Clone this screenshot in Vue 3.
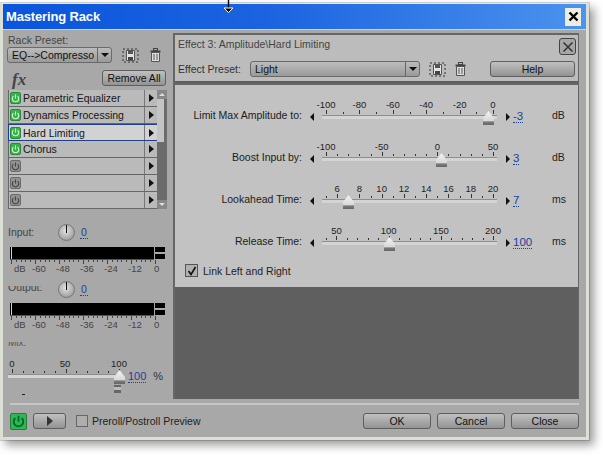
<script setup>
const effects = [
  { name: "Parametric Equalizer", on: true },
  { name: "Dynamics Processing", on: true },
  { name: "Hard Limiting", on: true, active: true },
  { name: "Chorus", on: true },
  { name: "", on: false },
  { name: "", on: false },
  { name: "", on: false },
];

// x positions are px inside a 175px wide slider, first tick at 4, last at 171
const makeTicks = (min, max, minorStep, isMajor) => {
  const out = [];
  for (let v = min; v <= max; v += minorStep) {
    out.push({ v, major: isMajor(v), x: 4 + ((v - min) / (max - min)) * 167 });
  }
  return out;
};

const sliders = [
  { label: "Limit Max Amplitude to:", value: "-3", unit: "dB", thumb: 166, ticks: makeTicks(-100, 0, 10, (v) => v % 20 === 0) },
  { label: "Boost Input by:", value: "3", unit: "dB", thumb: 119, ticks: makeTicks(-100, 50, 10, (v) => v % 50 === 0) },
  { label: "Lookahead Time:", value: "7", unit: "ms", thumb: 26, ticks: makeTicks(5, 20, 1, (v) => v % 2 === 0) },
  { label: "Release Time:", value: "100", unit: "ms", thumb: 67, ticks: makeTicks(40, 200, 10, (v) => v % 50 === 0) },
];

const meterLabels = [
  { t: "dB", x: 3 },
  { t: "-60", x: 21 },
  { t: "-48", x: 45 },
  { t: "-36", x: 69 },
  { t: "-24", x: 93 },
  { t: "-12", x: 117 },
  { t: "0", x: 143 },
];
const meterTicks = [];
for (let i = 0; i <= 30; i++) meterTicks.push({ x: 1 + i * 4.8, major: i % 5 === 0 });

const meters = [
  { label: "Input:", cls: "" },
  { label: "Output:", cls: "clipped" },
];

const mixTicks = [];
for (let v = 0; v <= 100; v += 10) mixTicks.push({ v, major: v % 50 === 0, x: 4 + v * 1.07 });
</script>

<template>
  <div class="page">
    <div class="win">
      <div class="title">
        <span class="title-text">Mastering Rack</span>
        <button class="x-btn">
          <svg width="11" height="11" viewBox="0 0 11 11"><path d="M1.5 1.5l8 8M9.5 1.5l-8 8" stroke="#000" stroke-width="2.4" /></svg>
        </button>
      </div>

      <div class="main">
        <div class="left">
          <div class="lbl rack-lbl">Rack Preset:</div>
          <div class="preset-row">
            <div class="select rack-select">
              <span class="select-text">EQ--&gt;Compresso</span>
              <span class="select-arrow"><i></i></span>
            </div>
            <svg class="save" width="17" height="15" viewBox="0 0 17 15">
              <rect x="1" y="1" width="15" height="13" fill="none" stroke="#333" stroke-dasharray="2 2" />
              <path d="M4.5 2.5h8v10h-8z" fill="#e4e4e4" stroke="#555" />
              <rect x="6" y="3" width="5" height="3" fill="#555" />
              <rect x="6" y="9" width="5" height="3" fill="#444" />
            </svg>
            <svg class="trash" width="11" height="14" viewBox="0 0 11 14">
              <rect x="3.5" y="0.5" width="4" height="2" fill="none" stroke="#444" />
              <rect x="0.5" y="2.5" width="10" height="2" fill="#444" />
              <path d="M1.5 4.5h8v9h-8z" fill="#ddd" stroke="#555" />
              <path d="M4 6v6M7 6v6" stroke="#555" />
            </svg>
          </div>

          <div class="fx-row">
            <span class="fx">fx</span>
            <button class="btn remove-all">Remove All</button>
          </div>

          <div class="rack">
            <div class="rack-list">
              <div v-for="(e, i) in effects" :key="i" class="rack-row" :class="{ active: e.active }">
                <span class="power" :class="{ on: e.on }">
                  <svg width="9" height="9" viewBox="0 0 9 9">
                    <path d="M2.4 2.2a3.2 3.2 0 1 0 4.2 0M4.5 0.5v4" fill="none" stroke="currentColor" stroke-width="1.1" />
                  </svg>
                </span>
                <span class="rack-name">{{ e.name }}</span>
                <span class="rack-arrow"><i class="tri-r"></i></span>
              </div>
            </div>
            <div class="scroll">
              <span class="scroll-end"><i class="tri-u"></i></span>
              <span class="scroll-thumb"></span>
              <span class="scroll-end bottom"><i class="tri-d"></i></span>
            </div>
          </div>

          <div v-for="m in meters" :key="m.label" class="meter-block" :class="m.cls">
            <div class="meter-head">
              <span class="lbl meter-lbl">{{ m.label }}</span>
              <span class="knob"><i></i></span>
              <span class="val">0</span>
            </div>
            <div class="meter">
              <div class="meter-bar"><i></i></div>
              <div class="meter-clip"><i></i><i></i></div>
            </div>
            <div class="meter-ticks">
              <i v-for="t in meterTicks" :key="t.x" :class="{ major: t.major }" :style="{ left: t.x + 'px' }"></i>
            </div>
            <div class="meter-scale">
              <span v-for="l in meterLabels" :key="l.t" :style="{ left: l.x + 'px' }">{{ l.t }}</span>
            </div>
          </div>

          <div class="lbl mix-lbl">Mix:</div>
          <div class="mix">
            <div class="mix-slider">
              <span class="tick-lbl" style="left: 4px">0</span>
              <span class="tick-lbl" style="left: 57px">50</span>
              <span class="tick-lbl" style="left: 111px">100</span>
              <i v-for="t in mixTicks" :key="t.v" class="tick" :class="{ major: t.major }" :style="{ left: t.x + 'px' }"></i>
              <span class="track"></span>
              <span class="thumb" style="left: 111px"></span>
              <span class="mix-mark"></span>
              <span class="mix-dash"></span>
            </div>
            <span class="val mix-val">100</span>
            <span class="mix-unit">%</span>
          </div>
        </div>

        <div class="right">
          <div class="fx-head">
            <div class="fx-title-row">
              <span class="fx-title">Effect 3: Amplitude\Hard Limiting</span>
              <button class="panel-x">
                <svg width="12" height="12" viewBox="0 0 12 12"><path d="M1.5 1.5l9 9M10.5 1.5l-9 9" stroke="#333" stroke-width="1.5" /></svg>
              </button>
            </div>
            <div class="fx-preset-row">
              <span class="fx-preset-lbl">Effect Preset:</span>
              <div class="select fx-select">
                <span class="select-text">Light</span>
                <span class="select-arrow"><i></i></span>
              </div>
              <svg class="save" width="17" height="15" viewBox="0 0 17 15">
                <rect x="1" y="1" width="15" height="13" fill="none" stroke="#333" stroke-dasharray="2 2" />
                <path d="M4.5 2.5h8v10h-8z" fill="#e4e4e4" stroke="#555" />
                <rect x="6" y="3" width="5" height="3" fill="#555" />
                <rect x="6" y="9" width="5" height="3" fill="#444" />
              </svg>
              <svg class="trash" width="11" height="14" viewBox="0 0 11 14">
                <rect x="3.5" y="0.5" width="4" height="2" fill="none" stroke="#444" />
                <rect x="0.5" y="2.5" width="10" height="2" fill="#444" />
                <path d="M1.5 4.5h8v9h-8z" fill="#ddd" stroke="#555" />
                <path d="M4 6v6M7 6v6" stroke="#555" />
              </svg>
              <button class="btn help">Help</button>
            </div>
          </div>

          <div class="fx-body">
            <div v-for="s in sliders" :key="s.label" class="s-row">
              <span class="s-label">{{ s.label }}</span>
              <i class="tri-l"></i>
              <div class="slider">
                <template v-for="t in s.ticks" :key="t.v">
                  <span v-if="t.major" class="tick-lbl" :style="{ left: t.x + 'px' }">{{ t.v }}</span>
                  <i class="tick" :class="{ major: t.major }" :style="{ left: t.x + 'px' }"></i>
                </template>
                <span class="track"></span>
                <span class="thumb" :style="{ left: s.thumb + 'px' }"></span>
              </div>
              <i class="tri-r small"></i>
              <span class="val s-val">{{ s.value }}</span>
              <span class="s-unit">{{ s.unit }}</span>
            </div>
            <label class="link">
              <span class="check">
                <svg width="10" height="10" viewBox="0 0 10 10"><path d="M1.5 5l2.5 3.5L8.5 1" fill="none" stroke="#111" stroke-width="1.6" /></svg>
              </span>
              Link Left and Right
            </label>
          </div>
          <div class="fx-empty"></div>
        </div>
      </div>

      <div class="foot">
        <span class="foot-power">
          <svg width="13" height="13" viewBox="0 0 13 13">
            <path d="M3.4 3a4.8 4.8 0 1 0 6.2 0M6.5 0.8v6" fill="none" stroke="#063" stroke-width="1.8" />
          </svg>
        </span>
        <button class="btn play"><i class="tri-play"></i></button>
        <span class="foot-check"></span>
        <span class="foot-lbl">Preroll/Postroll Preview</span>
        <span class="spacer"></span>
        <button class="btn foot-btn">OK</button>
        <button class="btn foot-btn">Cancel</button>
        <button class="btn foot-btn">Close</button>
      </div>
    </div>

    <svg class="cursor" width="11" height="14" viewBox="0 0 11 14">
      <path d="M5.5 0v9" stroke="#000" stroke-width="1.4" />
      <path d="M1 8h9l-4.5 4.6z" fill="#000" stroke="#fff" />
    </svg>
  </div>
</template>

<style scoped>
.page {
  position: relative;
  width: 603px;
  height: 456px;
  overflow: hidden;
  background: #fff;
  padding-top: 3px;
  box-sizing: border-box;
  font-family: "Liberation Sans", Arial, sans-serif;
  font-size: 10.5px;
  color: #1a1a1a;
}
.win {
  width: 589px;
  height: 437px;
  box-sizing: border-box;
  background: #a8a8a8;
  border-top: 1px solid #dfe6ee;
  border-left: 3px solid #dcdfd4;
  border-right: 3px solid #dcdfd4;
  border-bottom: 3px solid #dcdfd4;
  box-shadow: 5px 5px 9px rgba(0, 0, 0, 0.4), 0 0 0 1px rgba(90, 95, 88, 0.25);
  display: flex;
  flex-direction: column;
}
.title {
  height: 25px;
  flex: none;
  display: flex;
  align-items: center;
  justify-content: space-between;
  background: linear-gradient(90deg, #0a55dc 0%, #1b63e0 45%, #4b93ee 100%);
  border-bottom: 1px solid #c6d6e8;
  padding: 0 5px 0 3px;
}
.title-text {
  color: #fff;
  font-weight: bold;
  font-size: 13px;
  letter-spacing: -0.15px;
}
.x-btn {
  width: 16px;
  height: 18px;
  padding: 0;
  border: 0;
  background: #efece0;
  display: flex;
  align-items: center;
  justify-content: center;
}
.main {
  flex: none;
  height: 369px;
  display: flex;
}
.left {
  width: 164px;
  margin-left: 4px;
  flex: none;
}
.lbl {
  color: #3a3a3a;
}
.rack-lbl {
  margin-top: 3px;
  margin-left: 1px;
  height: 14px;
  line-height: 14px;
  color: #444;
}
.preset-row {
  display: flex;
  align-items: center;
  height: 16px;
}
.select {
  display: flex;
  height: 16px;
  box-sizing: border-box;
  border: 1px solid #6a6a6a;
  border-radius: 3px;
  background: linear-gradient(#bcbcbc, #9a9a9a);
  align-items: stretch;
}
.rack-select {
  width: 105px;
  flex: none;
}
.select-text {
  flex: 1;
  padding-left: 4px;
  line-height: 14px;
  color: #111;
  overflow: hidden;
  white-space: nowrap;
}
.select-arrow {
  width: 13px;
  border-left: 1px solid #666;
  display: flex;
  align-items: center;
  justify-content: center;
}
.select-arrow i {
  border-left: 4px solid transparent;
  border-right: 4px solid transparent;
  border-top: 4px solid #111;
}
.save {
  flex: none;
  margin-left: 10px;
}
.trash {
  flex: none;
  margin-left: 11px;
}
.fx-row {
  display: flex;
  justify-content: space-between;
  align-items: center;
  height: 16px;
  width: 159px;
  margin-top: 7px;
}
.fx {
  font-family: "Liberation Serif", serif;
  font-style: italic;
  font-weight: bold;
  font-size: 17px;
  color: #444;
  margin-left: 5px;
  margin-top: 3px;
}
.btn {
  font-family: inherit;
  font-size: 10.5px;
  color: #111;
  padding: 0;
  height: 16px;
  box-sizing: border-box;
  border: 1px solid #5e5e5e;
  border-radius: 3px;
  background: linear-gradient(#c0c0c0, #939393);
}
.remove-all {
  width: 64px;
}
.rack {
  display: flex;
  margin-top: 4px;
  height: 119px;
  width: 160px;
}
.rack-list {
  width: 149px;
  margin-left: 1px;
  border-left: 1px solid #666;
  box-sizing: border-box;
}
.rack-row {
  height: 17px;
  box-sizing: border-box;
  display: flex;
  align-items: center;
  background: #bababa;
  border-bottom: 1px solid #666;
}
.rack-row.active {
  background: #d2d2d2;
  border: 1px solid #1f3f86;
  margin-left: -1px;
  width: 150px;
}
.power {
  width: 11px;
  height: 12px;
  margin-left: 1px;
  flex: none;
  border-radius: 2px;
  background: #929292;
  border: 1px solid #6a6a6a;
  box-sizing: border-box;
  color: #444;
  display: flex;
  align-items: center;
  justify-content: center;
}
.power.on {
  background: #35b44a;
  border-color: #2a8a38;
  color: #dff5df;
}
.rack-name {
  flex: 1;
  margin-left: 2px;
  color: #151515;
  white-space: nowrap;
}
.rack-arrow {
  width: 12px;
  align-self: stretch;
  border-left: 1px solid #777;
  display: flex;
  align-items: center;
  justify-content: center;
}
.tri-r {
  display: block;
  border-top: 4px solid transparent;
  border-bottom: 4px solid transparent;
  border-left: 5px solid #111;
}
.tri-r.small {
  border-left-width: 4px;
  margin-left: 9px;
}
.tri-l {
  display: block;
  border-top: 4px solid transparent;
  border-bottom: 4px solid transparent;
  border-right: 4px solid #111;
  margin-left: 8px;
  margin-right: 8px;
}
.tri-u,
.tri-d {
  display: block;
  border-left: 3px solid transparent;
  border-right: 3px solid transparent;
}
.tri-u {
  border-bottom: 3px solid #ddd;
}
.tri-d {
  border-top: 3px solid #ddd;
}
.scroll {
  width: 10px;
  flex: none;
  background: #6c6c6c;
  display: flex;
  flex-direction: column;
  border-radius: 2px;
}
.scroll-end {
  height: 9px;
  flex: none;
  background: #888;
  display: flex;
  align-items: center;
  justify-content: center;
}
.scroll-end.bottom {
  margin-top: auto;
}
.scroll-thumb {
  height: 43px;
  width: 7px;
  background: #c4c4c4;
}
.meter-block {
  margin-top: 15px;
  width: 158px;
}
.meter-block.clipped {
  margin-top: 6px;
}
.meter-head {
  display: flex;
  align-items: center;
  height: 16px;
  padding-left: 1px;
}
.meter-lbl {
  width: 50px;
  color: #444;
}
.clipped .meter-lbl {
  height: 8px;
  margin-top: 2px;
  line-height: 14px;
  overflow: hidden;
  display: flex;
  align-items: flex-end;
}
.knob {
  width: 17px;
  height: 17px;
  flex: none;
  border-radius: 50%;
  background: radial-gradient(circle at 45% 40%, #e2e2e2, #a4a4a4 70%, #777);
  border: 1px solid #777;
  box-sizing: border-box;
  display: flex;
  justify-content: center;
}
.knob i {
  width: 1px;
  height: 8px;
  background: #111;
}
.val {
  color: #1c3f9c;
  border-bottom: 1px dotted #1c3f9c;
  line-height: 12px;
}
.meter-head .val {
  margin-left: 5px;
  padding: 0 1px;
}
.meter {
  display: flex;
  gap: 1px;
  margin-top: 7px;
  margin-left: 3px;
  width: 155px;
}
.clipped .meter {
  margin-top: 6px;
}
.meter-bar {
  width: 144px;
  height: 12px;
  background: #000;
  position: relative;
}
.meter-bar i {
  position: absolute;
  left: 1px;
  top: 0;
  bottom: 0;
  width: 1px;
  background: #d8d8a8;
}
.meter-clip {
  flex: 1;
  display: flex;
  flex-direction: column;
  justify-content: space-between;
}
.meter-clip i {
  height: 5px;
  background: #000;
}
.meter-ticks {
  position: relative;
  height: 5px;
  margin-left: 3px;
  border-top: 1px solid #555;
  width: 144px;
  box-sizing: border-box;
}
.meter-ticks i {
  position: absolute;
  top: 0;
  width: 1px;
  height: 2px;
  background: #444;
}
.meter-ticks i.major {
  height: 4px;
}
.meter-scale {
  position: relative;
  height: 12px;
  margin-top: -1px;
  margin-left: 4px;
  font-size: 9.5px;
  color: #444;
  line-height: 12px;
}
.meter-scale span {
  position: absolute;
  top: 0;
}
.mix-lbl {
  margin-top: 11px;
  margin-left: 1px;
  height: 7px;
  overflow: hidden;
  display: flex;
  align-items: flex-end;
  color: #555;
  font-size: 10px;
  line-height: 12px;
}
.mix {
  display: flex;
  align-items: flex-start;
  margin-top: 9px;
  margin-left: 1px;
}
.mix-slider {
  position: relative;
  width: 119px;
  height: 42px;
  flex: none;
}
.mix-slider .track {
  right: 7px;
}
.mix-mark {
  position: absolute;
  left: 106px;
  top: 27px;
  width: 7px;
  height: 8px;
  background: linear-gradient(#666 0 2px, #bbb 2px 5px, #666 5px);
}
.mix-dash {
  position: absolute;
  left: 14px;
  top: 36px;
  width: 3px;
  height: 1px;
  background: #222;
}
.mix-val {
  margin-left: 1px;
  margin-top: 12px;
  font-size: 11px;
}
.mix-unit {
  margin-left: 7px;
  margin-top: 12px;
  color: #333;
  font-size: 11px;
  line-height: 12px;
}
.right {
  width: 406px;
  margin-left: 2px;
  margin-top: 3px;
  height: 366px;
  box-sizing: border-box;
  border: 2px solid #666;
  border-bottom: 0;
  border-right-width: 1px;
  background: #5f5f5f;
  display: flex;
  flex-direction: column;
}
.fx-head {
  background: #bcbcbc;
  height: 46px;
  flex: none;
  padding: 0 2px 0 3px;
}
.fx-title-row {
  height: 22px;
  display: flex;
  align-items: flex-start;
  justify-content: space-between;
  color: #444;
  line-height: 18px;
}
.panel-x {
  width: 17px;
  height: 17px;
  padding: 0;
  margin-top: 3px;
  border: 1px solid #444;
  border-radius: 3px;
  background: #a6a6a6;
  display: flex;
  align-items: center;
  justify-content: center;
}
.fx-preset-row {
  display: flex;
  align-items: center;
  height: 18px;
  margin-top: 3px;
}
.fx-preset-lbl {
  width: 72px;
  flex: none;
  color: #333;
}
.fx-select {
  width: 170px;
  flex: none;
}
.fx-preset-row .save {
  margin-left: 9px;
}
.fx-preset-row .trash {
  margin-left: 9px;
}
.help {
  width: 85px;
  flex: none;
  margin-left: 24px;
}
.fx-body {
  margin-top: 2px;
  border-top: 2px solid #666;
  background: #c2c2c2;
  height: 204px;
  flex: none;
  box-sizing: border-box;
  padding-top: 14px;
}
.s-row {
  height: 42px;
  display: flex;
  align-items: flex-start;
}
.s-label {
  width: 127px;
  flex: none;
  margin-top: 10px;
  text-align: right;
  color: #1c1c1c;
  white-space: nowrap;
}
.s-row .tri-l,
.s-row .tri-r {
  margin-top: 14px;
  flex: none;
}
.slider {
  position: relative;
  width: 175px;
  height: 30px;
  flex: none;
}
.tick-lbl {
  position: absolute;
  top: 0;
  transform: translateX(-50%);
  font-size: 9.5px;
  line-height: 12px;
  color: #222;
}
.tick {
  position: absolute;
  top: 13px;
  width: 1px;
  height: 2px;
  background: #333;
}
.tick.major {
  top: 11px;
  height: 4px;
}
.track {
  position: absolute;
  left: 0;
  right: 0;
  top: 16px;
  height: 4px;
  background: #d4d4d4;
  border-top: 1px solid #8e8e8e;
  box-sizing: border-box;
}
.thumb {
  position: absolute;
  top: 12px;
  width: 11px;
  height: 14px;
  margin-left: -5px;
  background: linear-gradient(#f4f4f4, #d8d8d8 70%, #7a7a7a 78%, #666);
  clip-path: polygon(50% 0, 100% 50%, 100% 100%, 0 100%, 0 50%);
}
.s-val {
  margin-top: 11px;
  margin-left: 3px;
  font-size: 11.5px;
  flex: none;
}
.s-unit {
  margin-top: 10px;
  margin-left: auto;
  margin-right: 8px;
  width: 18px;
  color: #222;
}
.link {
  display: flex;
  align-items: center;
  gap: 5px;
  margin-left: 10px;
  height: 13px;
  margin-top: -3px;
  color: #222;
}
.check {
  width: 11px;
  height: 11px;
  border: 1px solid #555;
  background: #b0b0b0;
  display: flex;
  align-items: center;
  justify-content: center;
}
.fx-empty {
  flex: 1;
}
.foot {
  flex: 1;
  display: flex;
  align-items: center;
  margin: 4px 7px 0 7px;
  border-top: 2px solid #c6c6c6;
}
.foot-power {
  width: 17px;
  height: 17px;
  box-sizing: border-box;
  border: 1px solid #2a7a3a;
  border-radius: 2px;
  background: #2fb850;
  display: flex;
  align-items: center;
  justify-content: center;
  flex: none;
}
.play {
  width: 33px;
  margin-left: 6px;
  display: flex;
  align-items: center;
  justify-content: center;
}
.tri-play {
  border-top: 5px solid transparent;
  border-bottom: 5px solid transparent;
  border-left: 6px solid #333;
}
.foot-check {
  width: 12px;
  height: 12px;
  margin-left: 10px;
  box-sizing: border-box;
  border: 1px solid #666;
  background: #aeaeae;
}
.foot-lbl {
  margin-left: 4px;
  color: #222;
}
.spacer {
  flex: 1;
}
.foot-btn {
  width: 68px;
  margin-left: 6px;
}
.cursor {
  position: absolute;
  left: 223px;
  top: 0;
}
</style>

<style>
html, body { margin: 0; background: #fff; }
</style>
